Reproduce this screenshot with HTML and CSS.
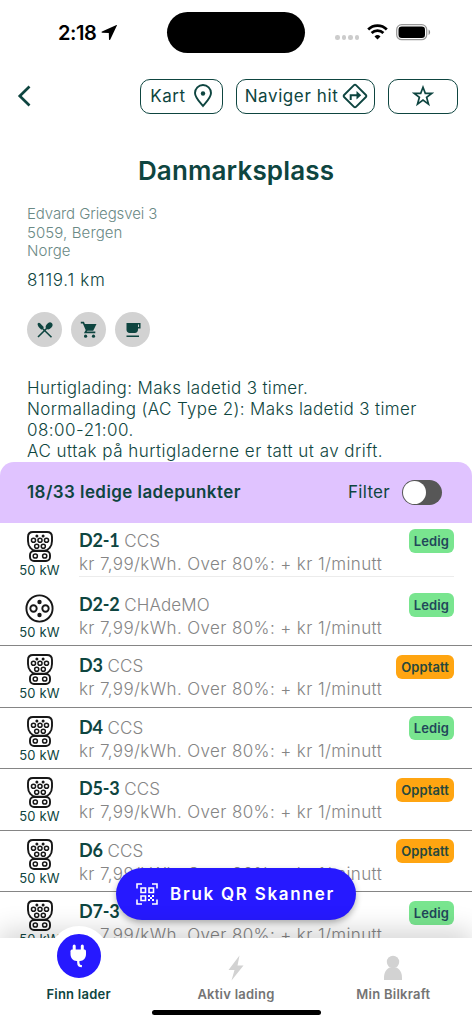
FILE: index.html
```html
<!DOCTYPE html>
<html lang="no">
<head>
<meta charset="utf-8">
<title>Danmarksplass</title>
<link rel="stylesheet" href="styles.css">
</head>
<body>
<svg class="defs" aria-hidden="true">
  <symbol id="ccs" viewBox="0 0 26 31">
    <g fill="none" stroke="#171717" stroke-width="1.9">
      <path d="M6 1h14c3 0 5 2 5 5v4c0 3-.8 5.200-2.500 7-1.500 1.800-3.200 2.800-5.200 2.800H8.700c-2 0-3.700-1-5.200-2.800C1.800 15.200 1 13 1 10V6c0-3 2-5 5-5z"/>
      <rect x="3" y="20" width="20" height="10" rx="4"/>
      <g stroke-width="1.5"><circle cx="6.500" cy="9.200" r="2.050"/><circle cx="13" cy="9.200" r="2.050"/><circle cx="19.500" cy="9.200" r="2.050"/><circle cx="9.700" cy="15.300" r="2.050"/><circle cx="16.300" cy="15.300" r="2.050"/><circle cx="8.300" cy="25" r="2.100"/><circle cx="17.700" cy="25" r="2.100"/></g>
    </g>
    <g fill="#171717"><circle cx="9.900" cy="4.900" r="1.500"/><circle cx="16.100" cy="4.900" r="1.500"/></g>
  </symbol>
  <symbol id="chademo" viewBox="0 0 29 29">
    <g fill="none" stroke="#171717" stroke-width="1.900"><circle cx="14.500" cy="14.500" r="13.100"/><circle cx="8.500" cy="14.500" r="3.200"/><circle cx="20.500" cy="14.500" r="3.200"/></g>
    <g fill="#171717"><circle cx="14.500" cy="8" r="2.200"/><circle cx="14.500" cy="21" r="2.200"/></g>
  </symbol>
</svg>
<div class="screen">
  <header class="status">
    <div class="clock"><span>2:18</span><svg width="17" height="17" viewBox="0 0 17 17"><path d="M15.500 1.100L1 7.500c-.7.300-.6 1.200.2 1.200l6.600.2.200 6.500c0 .8 1 .9 1.300.2L15.900 1.500c.2-.4-.1-.5-.4-.4z"/></svg></div>
    <div class="island"></div>
    <div class="signals">
      <span class="dots"><i></i><i></i><i></i><i></i></span>
      <svg class="wifi" width="21" height="16" viewBox="0 0 21 16"><g fill="none" stroke="#000" stroke-width="2.700"><path d="M1.200 5.500a13.200 13.200 0 0 1 18.600 0"/><path d="M4.600 9a8.400 8.400 0 0 1 11.800 0"/></g><path d="M10.500 15.500l-3-3a4.300 4.300 0 0 1 6 0z"/></svg>
      <svg class="battery" width="35" height="17" viewBox="0 0 35 17"><rect x=".7" y=".7" width="30" height="15" rx="5" fill="none" stroke="#999" stroke-width="1.300"/><rect x="2.500" y="2.500" width="26.500" height="11.500" rx="3.300"/><path d="M32.600 5.500c2 1 2 4.500 0 5.500z" fill="#888"/></svg>
    </div>
  </header>

  <nav class="toolbar">
    <svg class="back" width="14" height="22" viewBox="0 0 14 22"><path d="M12.500 1.500L2.800 11l9.700 9.500" fill="none" stroke="#0e4540" stroke-width="2.700"/></svg>
    <div class="actions">
      <button class="pill map"><span>Kart</span><svg width="20" height="24" viewBox="0 0 20 24"><path d="M10 22C6.500 17.800 2 13.500 2 9a8 8 0 0 1 16 0c0 4.500-4.500 8.800-8 13z" fill="none" stroke="#0e4540" stroke-width="1.900"/><circle cx="10" cy="9.500" r="2.200" fill="#0e4540"/></svg></button>
      <button class="pill navigate"><span>Naviger hit</span><svg width="26" height="26" viewBox="0 0 26 26"><path d="M12 2.100L2.100 12a1.400 1.400 0 0 0 0 2L12 23.900a1.400 1.400 0 0 0 2 0l9.900-9.900a1.400 1.400 0 0 0 0-2L14 2.100a1.400 1.400 0 0 0-2 0z" fill="none" stroke="#0e4540" stroke-width="1.900"/><path d="M8.700 17v-4.700h7" fill="none" stroke="#0e4540" stroke-width="2"/><path d="M14.500 8l4.700 4.300-4.700 4.300z" fill="#0e4540"/></svg></button>
      <button class="pill favorite"><svg width="22" height="22" viewBox="0 0 22 22"><path d="M11 2.300l2.300 6h6.500l-5.200 4 1.900 6.800-5.500-4-5.500 4 1.900-6.800-5.200-4h6.500z" fill="none" stroke="#0e4540" stroke-width="1.700"/></svg></button>
    </div>
  </nav>

  <main class="station">
    <h1>Danmarksplass</h1>
    <address><span class="street">Edvard Griegsvei 3</span><br>5059, Bergen<br>Norge</address>
    <p class="distance">8119.1 km</p>
    <div class="amenities">
      <span><svg width="18" height="18" viewBox="0 0 18 18"><path d="M1.800 2.200c.7-.7 1.600-.7 2.300 0l3.800 4-2.500 2.500C3.300 7 1 4.500 1.800 2.200z" fill="#0e4540"/><ellipse cx="13.100" cy="4.900" rx="2.800" ry="3.900" transform="rotate(42 13.100 4.900)" fill="#0e4540"/><path d="M5.500 6.500l10 9.700M10.800 7.200L2 16" stroke="#0e4540" stroke-width="1.600"/></svg></span>
      <span><svg width="18" height="18" viewBox="0 0 18 18"><path d="M.8 1.600h2.600l3.200 7.600-1.300 2.200h10" fill="none" stroke="#0e4540" stroke-width="1.600"/><path d="M4 3h12.500l-3.300 6.800H6.700z" fill="#0e4540"/><circle cx="5.600" cy="15.200" r="1.600" fill="#0e4540"/><circle cx="13.500" cy="15.200" r="1.600" fill="#0e4540"/></svg></span>
      <span><svg width="18" height="18" viewBox="0 0 18 18"><path d="M2.500 2H14v6.500c0 2-1.200 3.500-3.200 3.500H5.700c-2 0-3.200-1.500-3.200-3.500z" fill="#0e4540"/><path d="M13 2.700h2.800v4H13M2.500 15.300H15" fill="none" stroke="#0e4540" stroke-width="1.500"/></svg></span>
    </div>
    <p class="info"><span class="limits">Hurtiglading: Maks ladetid 3 timer.<br>Normallading (AC Type 2): Maks ladetid 3 timer</span><br>08:00-21:00.<br>AC uttak på hurtigladerne er tatt ut av drift.</p>
  </main>

  <section class="chargers">
    <div class="summary"><b>18/33 ledige ladepunkter</b><span class="filter">Filter</span><span class="switch"></span></div>
    <div class="row first"><div class="plug"><svg width="26" height="31"><use href="#ccs"/></svg><small>50 kW</small></div><div class="detail"><div class="name"><b>D2-1</b> CCS</div><div class="price">kr 7,99/kWh. Over 80%: + kr 1/minutt</div></div><span class="tag free">Ledig</span></div>
    <div class="row"><div class="plug"><svg width="29" height="31"><use href="#chademo"/></svg><small>50 kW</small></div><div class="detail"><div class="name"><b>D2-2</b> CHAdeMO</div><div class="price">kr 7,99/kWh. Over 80%: + kr 1/minutt</div></div><span class="tag free">Ledig</span></div>
    <div class="row"><div class="plug"><svg width="26" height="31"><use href="#ccs"/></svg><small>50 kW</small></div><div class="detail"><div class="name"><b>D3</b> CCS</div><div class="price">kr 7,99/kWh. Over 80%: + kr 1/minutt</div></div><span class="tag busy">Opptatt</span></div>
    <div class="row"><div class="plug"><svg width="26" height="31"><use href="#ccs"/></svg><small>50 kW</small></div><div class="detail"><div class="name"><b>D4</b> CCS</div><div class="price">kr 7,99/kWh. Over 80%: + kr 1/minutt</div></div><span class="tag free">Ledig</span></div>
    <div class="row"><div class="plug"><svg width="26" height="31"><use href="#ccs"/></svg><small>50 kW</small></div><div class="detail"><div class="name"><b>D5-3</b> CCS</div><div class="price">kr 7,99/kWh. Over 80%: + kr 1/minutt</div></div><span class="tag busy">Opptatt</span></div>
    <div class="row"><div class="plug"><svg width="26" height="31"><use href="#ccs"/></svg><small>50 kW</small></div><div class="detail"><div class="name"><b>D6</b> CCS</div><div class="price">kr 7,99/kWh. Over 80%: + kr 1/minutt</div></div><span class="tag busy">Opptatt</span></div>
    <div class="row"><div class="plug"><svg width="26" height="31"><use href="#ccs"/></svg><small>50 kW</small></div><div class="detail"><div class="name"><b>D7-3</b></div><div class="price">kr 7,99/kWh. Over 80%: + kr 1/minutt</div></div><span class="tag free">Ledig</span></div>
  </section>

  <button class="scan"><svg width="22" height="22" viewBox="0 0 22 22"><g fill="none" stroke="#fff" stroke-width="1.600"><path d="M1 5.500V1h5M16 1h5v4.500M1 16.500V21h5M21 16.500V21h-5M5 5h4.500v4.500H5zM13 5h4.500v4.500H13zM5 13h4.500v4.500H5z"/></g><path d="M12 12h2v2h-2zM16 12h2v2h-2zM14 14h2v2h-2zM12 16h2v2h-2zM16 16h2v2h-2z" fill="#fff"/></svg><span>Bruk QR Skanner</span></button>

  <footer class="tabs">
    <div class="tab active"><span class="bubble"><svg width="17" height="24" viewBox="0 0 17 24"><path d="M4.200 6V2M12.300 6V2" stroke="#fff" stroke-width="3" stroke-linecap="round"/><path d="M2.500 5.500h11.500c1.200 0 2 .7 2 1.700V10c0 4-2.500 7-6 7h-3.500c-3.500 0-6-3-6-7V7.200c0-1 .8-1.700 2-1.700z" fill="#fff"/><path d="M8.300 16.500v2c0 2.300 1 3.700 3.600 3.700" fill="none" stroke="#fff" stroke-width="2.300"/></svg></span><span>Finn lader</span></div>
    <div class="tab"><svg width="18" height="26" viewBox="0 0 18 26"><path d="M12.500.5L1.500 15h6L4.500 25.500 16.500 10.500h-6z" fill="#d2d2d2"/></svg><span>Aktiv lading</span></div>
    <div class="tab"><svg width="18" height="26" viewBox="0 0 18 26"><circle cx="9" cy="7" r="6.200" fill="#d2d2d2"/><path d="M0 25v-2.500c0-5 2.500-8.500 5.500-10h7c3 1.500 5.500 5 5.500 10V25z" fill="#d2d2d2"/></svg><span>Min Bilkraft</span></div>
    <div class="home"></div>
  </footer>
</div>
</body>
</html>
```
FILE: styles.css
```css
* { box-sizing: border-box; }
body { margin: 0; background: #fff; color: #0e4540; font-family: Inter, "Noto Sans", sans-serif; }
h1, p { margin: 0; }
button { font: inherit; color: inherit; margin: 0; padding: 0; }
svg { display: block; flex: none; }
.defs { position: absolute; width: 0; height: 0; }
.screen { position: relative; width: 472px; height: 1024px; overflow: hidden; display: flex; flex-direction: column; }

.status { flex: none; height: 66px; display: grid; grid-template-columns: 167px 138px 167px; }
.clock { display: flex; align-items: center; gap: 4px; padding-left: 58px; color: #000; font-size: 20px; font-weight: 600; letter-spacing: -.4px; }
.clock svg { margin-top: -1px; }
.island { margin-top: 12px; height: 41px; border-radius: 21px; background: #000; }
.signals { display: flex; align-items: center; padding-left: 30px; }
.dots { display: flex; gap: 2px; margin-top: 9px; }
.dots i { width: 4.500px; height: 4.500px; border-radius: 50%; background: #ccc; }
.wifi { margin-left: 8px; margin-top: -2px; }
.battery { margin-left: 8px; margin-top: -1px; }

.toolbar { flex: none; height: 60px; padding: 0 14px 0 17px; display: flex; align-items: center; justify-content: space-between; }
.actions { display: flex; gap: 13px; }
.pill { height: 35px; border: 1.500px solid #0e4540; border-radius: 10px; background: #fff; display: flex; align-items: center; justify-content: center; font-size: 17px; letter-spacing: .6px; }
.map { width: 83px; gap: 7px; }
.navigate { width: 139px; gap: 4px; padding-left: 2px; }
.favorite { width: 70px; }

.station { flex: none; height: 335.500px; padding: 27px 27px 0; overflow: hidden; }
h1 { text-align: center; font-size: 26px; line-height: 36px; font-weight: 600; letter-spacing: .15px; }
address { margin-top: 16px; font-style: normal; font-size: 15px; line-height: 18.700px; font-weight: 300; color: #6a8985; letter-spacing: .1px; }
.street { letter-spacing: -.1px; }
.distance { margin-top: 8px; font-size: 17px; line-height: 22px; font-weight: 300; letter-spacing: .7px; }
.amenities { display: flex; gap: 9px; margin-top: 21px; }
.amenities span { width: 35px; height: 35px; border-radius: 50%; background: #d2d2d2; display: grid; place-items: center; }
.info { margin-top: 31px; font-size: 17px; line-height: 20.900px; font-weight: 300; letter-spacing: .47px; white-space: nowrap; }
.limits { letter-spacing: .35px; }

.chargers { flex: none; }
.summary { height: 61.500px; border-radius: 14px 14px 0 0; background: #e0c3ff; padding: 0 30px 0 27px; display: flex; align-items: center; font-size: 17px; }
.summary b { font-weight: 600; letter-spacing: .43px; }
.filter { margin-left: auto; letter-spacing: .3px; }
.switch { margin-left: 12px; width: 40px; height: 25px; border-radius: 13px; background: #575757; padding: 1px; }
.switch::before { content: ""; display: block; width: 23px; height: 23px; border-radius: 50%; background: #fff; }

.row { height: 61.500px; padding: 0 18px 0 0; display: flex; align-items: flex-start; border-bottom: 1px solid #858585; background: #fff; }
.row.first { border-bottom-color: transparent; }
.plug { width: 79px; padding-top: 8px; display: flex; flex-direction: column; align-items: center; }
.plug small { font-size: 13px; line-height: 16px; letter-spacing: .15px; }
.detail { flex: 1; height: 57px; padding-top: 8px; color: #858585; font-size: 17px; font-weight: 300; white-space: nowrap; }
.name { line-height: 22px; letter-spacing: .1px; }
.name b { font-family: Lato, sans-serif; font-size: 18px; font-weight: 700; color: #0e4540; letter-spacing: -.2px; }
.price { line-height: 25px; letter-spacing: .38px; }
.tag { margin-top: 8.500px; height: 24px; padding: 0 5px; border-radius: 6px; font-size: 13px; line-height: 24px; font-weight: 600; letter-spacing: .1px; }
.free { background: #79e58f; color: #22475a; }
.busy { background: #ffa511; color: #25483d; }
.first .detail { height: 54px; padding-top: 5.500px; border-bottom: 1px solid #ececec; }
.first .tag { margin-top: 6px; position: relative; }
.first .tag::before { content: ""; position: absolute; right: 0; bottom: -24px; width: 46px; height: 1px; background: #ececec; }

.scan { position: absolute; left: 116px; top: 868px; width: 240px; height: 52px; border: 0; border-radius: 26px; background: #2619ff; color: #fff; display: flex; align-items: center; gap: 12px; padding-left: 20px; font-size: 17px; font-weight: 600; letter-spacing: 1.730px; white-space: nowrap; box-shadow: 0 3px 6px rgba(0,0,0,.3); }

.tabs { position: absolute; left: 0; right: 0; bottom: 0; height: 86px; background: #fff; display: grid; grid-template-columns: repeat(3, 1fr); box-shadow: 0 -8px 24px rgba(0,0,0,.16); }
.tab { display: flex; flex-direction: column; align-items: center; justify-content: flex-end; gap: 5px; height: 64px; color: #747474; font-size: 13px; line-height: 16px; font-weight: 600; letter-spacing: .25px; }
.active { color: #0e4540; gap: 0; }
.bubble { flex: none; width: 60px; height: 60px; border: 8px solid #fff; border-radius: 50%; background: #2619ff; display: grid; place-items: center; }
.home { position: absolute; left: 152px; bottom: 9px; width: 169px; height: 5px; border-radius: 3px; background: #000; }
```
